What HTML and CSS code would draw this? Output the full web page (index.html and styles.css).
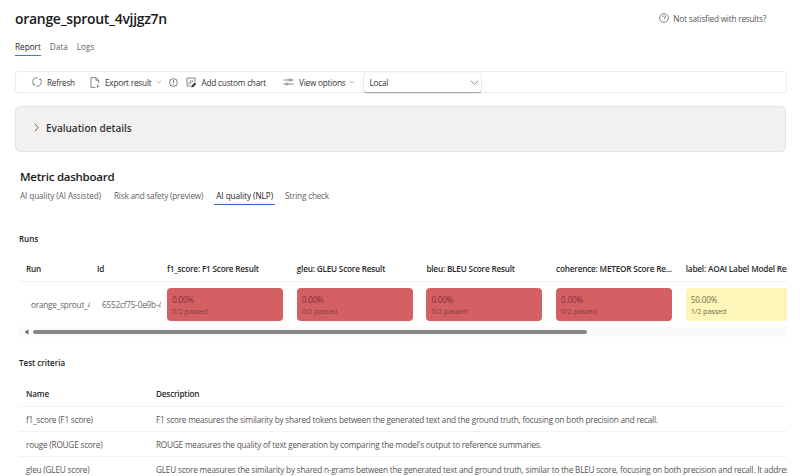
FILE: index.html
```html
<!DOCTYPE html>
<html lang="en">
<head>
<meta charset="utf-8">
<title>orange_sprout_4vjjgz7n</title>
<link rel="stylesheet" href="styles.css">
</head>
<body>
<div class="page">
  <header class="top">
    <h1 class="title">orange_sprout_4vjjgz7n</h1>
    <div class="help">
      <svg class="ic" viewBox="0 0 10 10" width="10" height="10"><circle cx="5" cy="5" r="4.4" fill="none" stroke="#555" stroke-width=".7"/><path d="M3.7 4c0-1.700 2.700-1.700 2.700 0 0 1-1.300 1-1.300 2" fill="none" stroke="#555" stroke-width=".7"/><circle cx="5.100" cy="7.400" r=".4" fill="#555"/></svg>
      <span>Not satisfied with results?</span>
    </div>
  </header>
  <nav class="tabs">
    <span class="tab active">Report</span>
    <span class="tab">Data</span>
    <span class="tab">Logs</span>
  </nav>
  <div class="toolbar">
    <span class="tool tool-refresh">
      <svg viewBox="0 0 10 10" width="10" height="10"><path d="M5.600.7A4.300 4.300 0 0 0 1.900 8M4.400 9.300A4.300 4.300 0 0 0 8.100 2" fill="none" stroke="#555" stroke-width=".7"/><path d="M.9 7.500l1.100.6.500-1.200M9.100 2.500L8 1.900 7.500 3.100" fill="none" stroke="#555" stroke-width=".7"/></svg>
      Refresh
    </span>
    <span class="tool tool-export">
      <svg viewBox="0 0 10 11" width="10" height="11"><path d="M1 .6h5l2.600 2.700V6M1 .6v9.800h4.500M6 .6v2.700h2.600" fill="none" stroke="#555" stroke-width=".7"/><path d="M7.800 7.200v3M6.500 9l1.300 1.300L9.100 9" fill="none" stroke="#555" stroke-width=".7"/></svg>
      Export result
      <svg class="chev" viewBox="0 0 6 4" width="6" height="4"><path d="M.8.800L3 3 5.200.8" fill="none" stroke="#888" stroke-width=".6"/></svg>
    </span>
    <svg class="tool-info" viewBox="0 0 9 9" width="9" height="9"><circle cx="4.500" cy="4.500" r="3.900" fill="none" stroke="#444" stroke-width=".7"/><path d="M4.500 2.200v2.600h-.1M4.500 6.100v.6" fill="none" stroke="#444" stroke-width=".8"/></svg>
    <span class="tool tool-chart">
      <svg viewBox="0 0 11 11" width="11" height="11"><path d="M5 9H1V1h8v4" fill="none" stroke="#555" stroke-width=".7"/><path d="M3 7V5M4.700 7V3M6.400 5V3.500" fill="none" stroke="#555" stroke-width=".7"/><path d="M5.200 10.600l.6-2 3-3 1.400 1.400-3 3z" fill="#333"/></svg>
      Add custom chart
    </span>
    <span class="tool tool-view">
      <svg viewBox="0 0 11 10" width="11" height="10"><path d="M.5 3h5.500M8.500 3h2M.5 7h2M5 7h5.500" fill="none" stroke="#555" stroke-width=".7"/><circle cx="7.200" cy="3" r="1.200" fill="none" stroke="#555" stroke-width=".7"/><circle cx="3.700" cy="7" r="1.200" fill="none" stroke="#555" stroke-width=".7"/></svg>
      View options
      <svg class="chev" viewBox="0 0 6 4" width="6" height="4"><path d="M.8.800L3 3 5.200.8" fill="none" stroke="#888" stroke-width=".6"/></svg>
    </span>
    <div class="select">
      <span>Local</span>
      <svg viewBox="0 0 9 5" width="9" height="5"><path d="M.8.800L4.500 4.200 8.200.8" fill="none" stroke="#666" stroke-width=".7"/></svg>
    </div>
  </div>
  <section class="details">
    <svg viewBox="0 0 5 9" width="5" height="9"><path d="M.8.800L4.200 4.500.8 8.200" fill="none" stroke="#444" stroke-width=".8"/></svg>
    <span>Evaluation details</span>
  </section>
  <h2 class="dash-title">Metric dashboard</h2>
  <nav class="subtabs">
    <span class="subtab s1">AI quality (AI Assisted)</span>
    <span class="subtab s2">Risk and safety (preview)</span>
    <span class="subtab s3 active">AI quality (NLP)</span>
    <span class="subtab s4">String check</span>
  </nav>
  <h3 class="section-label runs-label">Runs</h3>
  <div class="runs">
    <div class="runs-grid">
      <div class="th">Run</div>
      <div class="th">Id</div>
      <div class="th">f1_score: F1 Score Result</div>
      <div class="th">gleu: GLEU Score Result</div>
      <div class="th">bleu: BLEU Score Result</div>
      <div class="th">coherence: METEOR Score Re...</div>
      <div class="th">label: AOAI Label Model Result</div>
      <div class="td"><span class="clip clip-run">orange_sprout_4vjjgz7n</span></div>
      <div class="td"><span class="clip clip-id">6552cf75-0e9b-4a21</span></div>
      <div class="td"><div class="score bad"><b>0.00%</b><small>0/2 passed</small></div></div>
      <div class="td"><div class="score bad"><b>0.00%</b><small>0/2 passed</small></div></div>
      <div class="td"><div class="score bad"><b>0.00%</b><small>0/2 passed</small></div></div>
      <div class="td"><div class="score bad"><b>0.00%</b><small>0/2 passed</small></div></div>
      <div class="td"><div class="score mid"><b>50.00%</b><small>1/2 passed</small></div></div>
    </div>
    <div class="scrollbar">
      <svg viewBox="0 0 5 6" width="5" height="6"><path d="M4.500.5v5L.5 3z" fill="#666"/></svg>
      <div class="thumb"></div>
    </div>
  </div>
  <h3 class="section-label criteria-label">Test criteria</h3>
  <div class="criteria">
    <div class="row head"><div class="c-name">Name</div><div class="c-desc">Description</div></div>
    <div class="row"><div class="c-name">f1_score (F1 score)</div><div class="c-desc">F1 score measures the similarity by shared tokens between the generated text and the ground truth, focusing on both precision and recall.</div></div>
    <div class="row"><div class="c-name">rouge (ROUGE score)</div><div class="c-desc">ROUGE measures the quality of text generation by comparing the model's output to reference summaries.</div></div>
    <div class="row"><div class="c-name">gleu (GLEU score)</div><div class="c-desc">GLEU score measures the similarity by shared n-grams between the generated text and ground truth, similar to the BLEU score, focusing on both precision and recall. It addresses the limitations of BLEU</div></div>
  </div>
</div>
</body>
</html>
```
FILE: styles.css
```css
* { box-sizing: border-box; }
html, body { margin: 0; height: 100%; overflow: hidden; background: #fff; }
body { font-family: "Open Sans", "Noto Sans", sans-serif; font-size: 8.200px; letter-spacing: -.19px; color: #424242; }
.page { width: 800px; height: 476px; overflow: hidden; padding: 0 13px 0 15px; }
h1, h2, h3 { margin: 0; }

.top { display: flex; justify-content: space-between; align-items: flex-start; height: 37px; padding-top: 9px; }
.title { font-size: 14px; font-weight: 600; letter-spacing: -.3px; line-height: 20px; color: #1a1a1a; }
.help { display: flex; align-items: center; gap: 4px; margin-right: 21px; color: #555; height: 18px; }
.ic { display: block; }

.tabs { display: flex; gap: 9px; height: 19px; letter-spacing: 0; }
.tab { line-height: 19px; height: 19px; color: #616161; border-bottom: 1.500px solid transparent; }
.tab.active { color: #242424; border-bottom-color: #2f80d8; }

.toolbar { display: flex; align-items: center; height: 22px; margin-top: 15px; border: 1px solid #ececec; border-radius: 3px; color: #333; }
.tool { display: flex; align-items: center; gap: 5px; white-space: nowrap; }
.tool .chev { margin-left: -1px; }
.tool-refresh { margin-left: 16px; }
.tool-export { margin-left: 15px; }
.tool-info { margin-left: 7px; }
.tool-chart { margin-left: 8px; }
.tool-view { margin-left: 17px; }
.select { margin-left: 9px; width: 117px; height: 19px; display: flex; align-items: center; justify-content: space-between; padding: 0 2px 0 5px; border-radius: 2px; box-shadow: 0 1px 1.500px rgba(0,0,0,.35), 0 0 1px rgba(0,0,0,.2); background: #fff; }

.details { display: flex; align-items: center; gap: 7px; height: 46px; width: 771px; margin-top: 13px; padding: 0 0 3px 18px; background: #f2f1f0; border: 1px solid #e4e4e4; border-radius: 5px; font-size: 10px; letter-spacing: 0; font-weight: 600; color: #333; }

.dash-title { font-size: 11.500px; font-weight: 600; letter-spacing: -.25px; line-height: 16px; color: #1a1a1a; margin: 17px 0 0 5px; }
.subtabs { display: flex; height: 18px; margin: 2px 0 0 3px; color: #616161; }
.subtab { padding: 0 2px; line-height: 17px; height: 18px; border-bottom: 1.500px solid transparent; white-space: nowrap; }
.s1 { letter-spacing: -.1px; }
.s2 { margin-left: 9px; }
.s3 { margin-left: 9px; letter-spacing: -.05px; color: #242424; border-bottom-color: #2f6fbd; }
.s4 { margin-left: 8px; }

.section-label { font-size: 8px; font-weight: 600; letter-spacing: 0; color: #222; line-height: 12px; margin-left: 4px; }
.runs-label { margin-top: 28px; }
.runs { margin: 12px 0 0 4px; overflow: hidden; }
.runs-grid { display: grid; grid-template-columns: 71px 74px repeat(5, 129.700px); width: 1000px; }
.th { height: 25px; line-height: 24px; padding-left: 7px; font-weight: 600; color: #2a2a2a; border-bottom: 1px solid #f0f0f0; white-space: nowrap; overflow: hidden; }
.th:nth-child(n+3) { padding-left: 3px; }
.td { height: 45px; padding-top: 6px; }
.clip { display: block; line-height: 33px; white-space: nowrap; overflow: hidden; color: #666; }
.clip-run { margin-left: 12px; width: 59px; }
.clip-id { margin-left: 12px; width: 59px; }
.score { margin-left: 3px; width: 116px; height: 33px; border-radius: 4px; padding: 6px 5px; display: flex; flex-direction: column; }
.score b { font-weight: 400; line-height: 12px; font-size: 8.200px; }
.score small { font-size: 7.400px; line-height: 11px; }
.bad { background: #d56064; color: #7a3338; }
.bad small { color: #8a3f44; }
.mid { background: #fdf6b8; color: #77734e; }
.scrollbar { display: flex; align-items: center; height: 10px; background: #fafafa; position: relative; padding-left: 5px; }
.thumb { position: absolute; left: 14px; top: 3px; width: 554px; height: 4px; border-radius: 2px; background: #868686; }

.criteria-label { margin-top: 20px; }
.criteria { margin: 13px 0 0 4px; }
.row { display: flex; height: 25px; line-height: 26px; border-bottom: 1px solid #f3f3f3; white-space: nowrap; overflow: hidden; color: #555; }
.row.head { font-weight: 600; color: #2a2a2a; line-height: 24px; }
.c-name { width: 137px; padding-left: 7px; flex: none; }
.c-desc { flex: 1; min-width: 0; overflow: hidden; }
```
